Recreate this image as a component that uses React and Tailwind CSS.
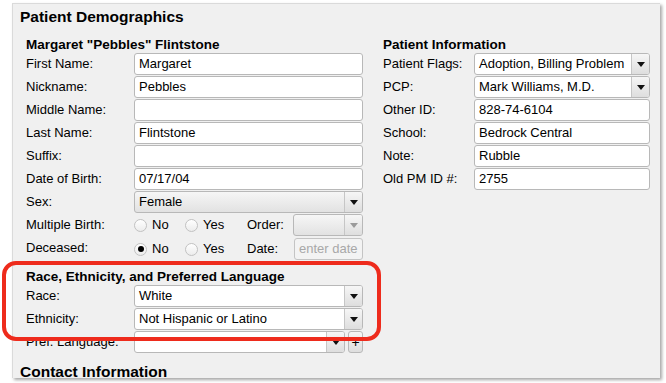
const font = { fontFamily: '"Liberation Sans", Arial, sans-serif' };

const Arrow = ({ disabled }) => (
  <svg width="8" height="5" viewBox="0 0 8 5">
    <path d="M0 0 H8 L4 5 Z" fill={disabled ? "#9a9a9a" : "#111"} />
  </svg>
);

const TextBox = ({ value, width, placeholder, disabled }) => (
  <div
    className={`h-[22px] border rounded-[3px] flex items-center pl-[4px] text-[13px] shrink-0 ${
      disabled ? "border-[#c4c4c4] bg-[#f3f3f3] text-[#a8a8a8]" : "border-[#b8b8b8] bg-white text-black"
    } ${width}`}
  >
    {value || placeholder}
  </div>
);

const Select = ({ value, width, gray, disabled }) => (
  <div
    className={`h-[22px] border border-[#b8b8b8] rounded-[3px] flex overflow-hidden shrink-0 ${width} ${
      gray ? "bg-gradient-to-b from-[#f6f6f6] to-[#e2e2e2]" : "bg-white"
    }`}
  >
    <div className="flex-1 flex items-center pl-[4px] text-[13px] text-black">{value}</div>
    <div className="w-[18px] border-l border-[#c6c6c6] bg-gradient-to-b from-[#f6f6f6] to-[#dedede] flex items-center justify-center">
      <Arrow disabled={disabled} />
    </div>
  </div>
);

const Radio = ({ checked, label }) => (
  <div className="flex items-center gap-[5px] text-[13px]">
    <div className="w-[13px] h-[13px] rounded-full border border-[#c2c2c2] bg-gradient-to-b from-white to-[#ececec] flex items-center justify-center">
      {checked && <div className="w-[6px] h-[6px] rounded-full bg-black" />}
    </div>
    <span>{label}</span>
  </div>
);

const Row = ({ label, labelW, children }) => (
  <div className="flex items-center h-[22px]">
    <div className={`text-[13px] text-black shrink-0 whitespace-nowrap ${labelW}`}>{label}</div>
    {children}
  </div>
);

export default function App() {
  return (
    <div className="relative w-[666px] h-[383px] bg-white overflow-hidden pt-[3px] pl-[12px]" style={font}>
      <div className="w-[648px] h-[375px] bg-[#f0f0f0] border-l border-t border-[#dadada] shadow-[2px_2px_3px_rgba(0,0,0,0.35)] overflow-hidden pl-[7px] pt-[3px] text-black">
        <h1 className="text-[15.5px] font-bold leading-5">Patient Demographics</h1>

        <div className="flex pl-[6px] mt-[10px] gap-[20px]">
          <div className="w-[337px] flex flex-col">
            <h2 className="text-[13.5px] font-bold leading-[16px] h-[16px] whitespace-nowrap">Margaret "Pebbles" Flintstone</h2>
            <div className="flex flex-col gap-px">
              <Row label="First Name:" labelW="w-[108px]"><TextBox value="Margaret" width="w-[229px]" /></Row>
              <Row label="Nickname:" labelW="w-[108px]"><TextBox value="Pebbles" width="w-[229px]" /></Row>
              <Row label="Middle Name:" labelW="w-[108px]"><TextBox value="" width="w-[229px]" /></Row>
              <Row label="Last Name:" labelW="w-[108px]"><TextBox value="Flintstone" width="w-[229px]" /></Row>
              <Row label="Suffix:" labelW="w-[108px]"><TextBox value="" width="w-[229px]" /></Row>
              <Row label="Date of Birth:" labelW="w-[108px]"><TextBox value="07/17/04" width="w-[229px]" /></Row>
              <Row label="Sex:" labelW="w-[108px]"><Select value="Female" width="w-[229px]" gray /></Row>
              <Row label="Multiple Birth:" labelW="w-[108px]">
                <div className="flex items-center w-[229px]">
                  <div className="w-[51px] shrink-0"><Radio label="No" /></div>
                  <div className="w-[62px] shrink-0"><Radio label="Yes" /></div>
                  <span className="text-[13px] whitespace-nowrap">Order:</span>
                  <div className="ml-auto"><Select value="" width="w-[70px]" gray disabled /></div>
                </div>
              </Row>
              <Row label="Deceased:" labelW="w-[108px]">
                <div className="flex items-center w-[229px] mt-[2px]">
                  <div className="w-[51px] shrink-0"><Radio label="No" checked /></div>
                  <div className="w-[62px] shrink-0"><Radio label="Yes" /></div>
                  <span className="text-[13px] whitespace-nowrap">Date:</span>
                  <div className="ml-auto"><TextBox placeholder="enter date" width="w-[69px] text-[12.5px] h-[21px]" disabled /></div>
                </div>
              </Row>
            </div>

            <h2 className="text-[13.5px] font-bold leading-[16px] h-[16px] mt-[10px] whitespace-nowrap">Race, Ethnicity, and Preferred Language</h2>
            <div className="flex flex-col gap-px">
              <Row label="Race:" labelW="w-[108px]"><Select value="White" width="w-[229px]" /></Row>
              <Row label="Ethnicity:" labelW="w-[108px]"><Select value="Not Hispanic or Latino" width="w-[229px]" /></Row>
              <Row label="Pref. Language:" labelW="w-[108px]">
                <Select value="" width="w-[211px]" />
                <div className="ml-[3px] w-[15px] h-[22px] border border-[#b8b8b8] rounded-[3px] bg-gradient-to-b from-[#f6f6f6] to-[#dedede] flex items-center justify-center text-[14px] leading-none">+</div>
              </Row>
            </div>
          </div>

          <div className="w-[267px] flex flex-col">
            <h2 className="text-[13.5px] font-bold leading-[16px] h-[16px] whitespace-nowrap">Patient Information</h2>
            <div className="flex flex-col gap-px">
              <Row label="Patient Flags:" labelW="w-[91px]"><Select value="Adoption, Billing Problem" width="w-[176px]" /></Row>
              <Row label="PCP:" labelW="w-[91px]"><Select value="Mark Williams, M.D." width="w-[176px]" /></Row>
              <Row label="Other ID:" labelW="w-[91px]"><TextBox value="828-74-6104" width="w-[176px]" /></Row>
              <Row label="School:" labelW="w-[91px]"><TextBox value="Bedrock Central" width="w-[176px]" /></Row>
              <Row label="Note:" labelW="w-[91px]"><TextBox value="Rubble" width="w-[176px]" /></Row>
              <Row label="Old PM ID #:" labelW="w-[91px]"><TextBox value="2755" width="w-[176px]" /></Row>
            </div>
          </div>
        </div>

        <h1 className="text-[15.5px] font-bold leading-5 mt-[9px]">Contact Information</h1>
      </div>

      <div className="absolute left-[2px] top-[261px] w-[379px] h-[80px] border-[4px] border-[#ee2b1c] rounded-[14px] pointer-events-none" />
    </div>
  );
}
